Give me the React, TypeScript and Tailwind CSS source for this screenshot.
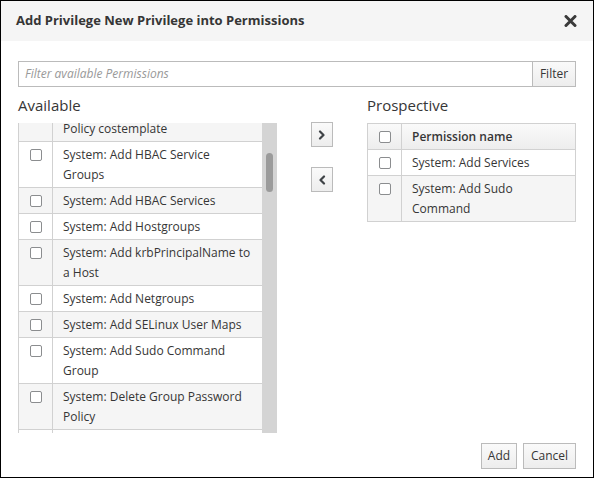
import React from "react";

const available = [
  "System: Add Group Password Policy costemplate",
  "System: Add HBAC Service Groups",
  "System: Add HBAC Services",
  "System: Add Hostgroups",
  "System: Add krbPrincipalName to a Host",
  "System: Add Netgroups",
  "System: Add SELinux User Maps",
  "System: Add Sudo Command Group",
  "System: Delete Group Password Policy",
  "System: Delete HBAC Service Groups",
  "System: Delete HBAC Services",
];

const prospective = ["System: Add Services", "System: Add Sudo Command"];

function Box() {
  return (
    <span className="block w-[12px] h-[12px] rounded-[2px] border border-[#8b8d8f] bg-white mt-[4px]" />
  );
}

function Row({ label, striped }: { label: string; striped: boolean }) {
  return (
    <div className={`flex border-b border-[#d1d1d1] ${striped ? "bg-[#f5f5f5]" : "bg-white"}`}>
      <div className="w-[34px] shrink-0 flex justify-center pt-[3px] pb-[2px] border-r border-[#d1d1d1]">
        <Box />
      </div>
      <div className="flex-1 px-[10px] pt-[3px] pb-[2px] leading-[20px]">{label}</div>
    </div>
  );
}

function Chevron({ dir }: { dir: "left" | "right" }) {
  return (
    <svg width="8" height="10" viewBox="0 0 8 10" fill="none">
      <path
        d={dir === "right" ? "M2 1.5L5.5 5L2 8.5" : "M6 1.5L2.5 5L6 8.5"}
        stroke="#3f4347"
        strokeWidth="2.2"
        strokeLinecap="round"
        strokeLinejoin="round"
      />
    </svg>
  );
}

export default function App() {
  return (
    <div
      className="w-[594px] h-[478px] border border-black bg-white flex flex-col text-[12px] text-[#363636]"
      style={{ fontFamily: '"Open Sans", "Liberation Sans", sans-serif' }}
    >
      {/* Header */}
      <div className="h-[40px] shrink-0 bg-[#f5f5f5] flex items-center justify-between pl-[15px] pr-[16px]">
        <span className="text-[13px] font-bold">Add Privilege New Privilege into Permissions</span>
        <svg width="13" height="12" viewBox="0 0 13 12" fill="none">
          <path d="M2 1.5L11 10.5M11 1.5L2 10.5" stroke="#3a3a3a" strokeWidth="3" strokeLinecap="round" />
        </svg>
      </div>

      <div className="flex-1 px-[17px] pt-[20px] flex flex-col">
        {/* Filter */}
        <div className="flex h-[26px]">
          <div className="flex-1 border border-[#bbbbbb] flex items-center px-[6px] italic text-[#999999]">
            Filter available Permissions
          </div>
          <button className="w-[43px] border border-l-0 border-[#bbbbbb] bg-gradient-to-b from-[#fafafa] to-[#ededed] text-[#363636]">
            Filter
          </button>
        </div>

        <div className="flex">
          {/* Available */}
          <div className="w-[259px] flex flex-col">
            <div className="text-[15px] leading-[20px] mt-[8px] mb-[8px]">Available</div>
            <div className="h-[310px] flex overflow-hidden">
              <div className="flex-1 border-l border-[#d1d1d1] overflow-hidden">
                <div className="-mt-[27px]">
                  {available.map((a, i) => (
                    <Row key={a} label={a} striped={i % 2 === 0} />
                  ))}
                </div>
              </div>
              <div className="w-[15px] shrink-0 bg-[#d4d4d4] pt-[30px] flex justify-center">
                <div className="w-[7px] h-[39px] rounded-full bg-[#9b9b9b]" />
              </div>
            </div>
          </div>

          {/* Move buttons */}
          <div className="w-[90px] flex flex-col items-center pt-[35px] gap-[20px]">
            <button className="w-[22px] h-[25px] border border-[#bbbbbb] bg-gradient-to-b from-[#fafafa] to-[#ededed] flex items-center justify-center">
              <Chevron dir="right" />
            </button>
            <button className="w-[22px] h-[25px] border border-[#bbbbbb] bg-gradient-to-b from-[#fafafa] to-[#ededed] flex items-center justify-center">
              <Chevron dir="left" />
            </button>
          </div>

          {/* Prospective */}
          <div className="w-[209px] flex flex-col">
            <div className="text-[15px] leading-[20px] mt-[8px] mb-[8px]">Prospective</div>
            <div className="border-l border-r border-t border-[#d1d1d1]">
              <div className="flex border-b border-[#d1d1d1] bg-gradient-to-b from-[#fafafa] to-[#ededed]">
                <div className="w-[34px] shrink-0 flex justify-center pt-[3px] pb-[2px] border-r border-[#d1d1d1]">
                  <Box />
                </div>
                <div className="flex-1 px-[10px] pt-[3px] pb-[2px] leading-[20px] font-semibold">Permission name</div>
              </div>
              {prospective.map((p, i) => (
                <Row key={p} label={p} striped={i % 2 === 1} />
              ))}
            </div>
          </div>
        </div>

        {/* Footer */}
        <div className="flex justify-end gap-[6px] mt-[10px]">
          <button className="h-[26px] w-[36px] border border-[#bbbbbb] bg-gradient-to-b from-[#fafafa] to-[#ededed]">
            Add
          </button>
          <button className="h-[26px] w-[53px] border border-[#bbbbbb] bg-gradient-to-b from-[#fafafa] to-[#ededed]">
            Cancel
          </button>
        </div>
      </div>
    </div>
  );
}
